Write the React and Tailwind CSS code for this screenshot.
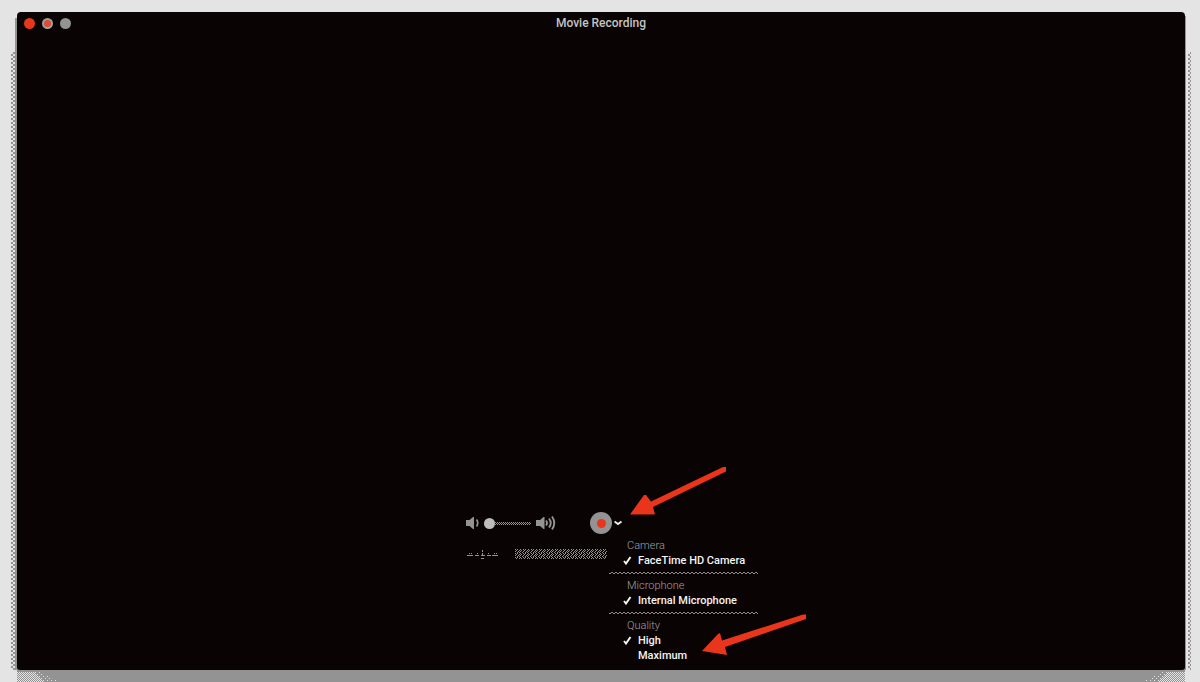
import { useState } from "react";

const dither =
  "bg-[repeating-conic-gradient(#939393_0_25%,#e4e4e4_0_50%)] bg-[length:4px_4px]";
const rule =
  "bg-[repeating-conic-gradient(#8f8f8f_0_25%,#090303_0_50%)] bg-[length:4px_2px]";

function MenuSection({ title, items, value, onSelect }) {
  return (
    <div role="group" aria-label={title}>
      <div className="pl-[18px] text-[11px] leading-[15px] font-light text-[#a0a0a0]">{title}</div>
      {items.map((item) => (
        <button
          key={item}
          type="button"
          role="menuitemradio"
          aria-checked={item === value}
          onClick={() => onSelect(item)}
          className="flex w-full items-center pl-[14px] text-left text-[11px] leading-[15px] font-medium whitespace-nowrap text-[#f4f4f4]"
        >
          <span className="flex w-[15px] shrink-0">
            {item === value && (
              <svg width="9" height="9" viewBox="0 0 9 9" fill="none" stroke="#f4f4f4" strokeWidth="2" aria-hidden="true">
                <path d="M1 5 L3 7.5 L7.5 1" />
              </svg>
            )}
          </span>
          {item}
        </button>
      ))}
    </div>
  );
}

function ShadowCorner({ className }) {
  return (
    <svg className={className} width="50" height="14" viewBox="0 0 50 14" shapeRendering="crispEdges" aria-hidden="true">
      <defs>
        <pattern id="cornerDots" width="4" height="4" patternUnits="userSpaceOnUse">
          <rect width="1" height="1" fill="#e4e4e4" />
          <rect x="2" y="2" width="1" height="1" fill="#e4e4e4" />
        </pattern>
        <pattern id="cornerDense" width="2" height="2" patternUnits="userSpaceOnUse">
          <rect width="1" height="1" fill="#e4e4e4" />
          <rect x="1" y="1" width="1" height="1" fill="#e4e4e4" />
        </pattern>
      </defs>
      <path d="M0 2H16L28 12H0Z" fill="url(#cornerDense)" />
      <path d="M16 2H22L44 12H28Z" fill="url(#cornerDots)" />
    </svg>
  );
}

export default function App() {
  const [volume, setVolume] = useState(0);
  const [quality, setQuality] = useState("High");
  const keep = () => {};

  return (
    <div className="relative flex min-h-screen flex-col overflow-hidden bg-[#e4e4e4] pt-3 pr-[15px] pl-[17px] font-[Roboto,'Liberation_Sans',sans-serif]">
      <div aria-hidden="true" className={`absolute top-[52px] bottom-3 left-[11px] w-1 ${dither}`} />
      <div aria-hidden="true" className="absolute top-[18px] bottom-3 left-[15px] w-1 bg-[#939393]" />
      <div aria-hidden="true" className={`absolute top-[52px] right-[9px] bottom-3 w-[3px] ${dither}`} />
      <div aria-hidden="true" className="absolute top-[16px] right-[14px] bottom-3 w-1 bg-[#939393]" />

      <main className="relative flex flex-1 flex-col rounded-t-[4px] rounded-b-[3px] bg-[#090303] pb-[110px]">
        <header className="grid grid-cols-3 items-center px-[7px] pt-[3px]">
          <div className="flex gap-[7px]">
            <button type="button" aria-label="Close" className="size-[11px] rounded-full bg-[#e8351b]" />
            <button type="button" aria-label="Minimize" className="size-[11px] rounded-full border-2 border-[#a0a0a0] bg-[#e04a35]" />
            <button type="button" aria-label="Zoom" className="size-[11px] rounded-full bg-[#939393]" />
          </div>
          <h1 className="text-center text-[12px] leading-4 font-medium text-[#c4c4c4]">Movie Recording</h1>
        </header>

        <section aria-label="Recording controls" className="mx-auto mt-auto w-[270px]">
          <div className="grid grid-cols-[1fr_22px_1fr] items-center">
            <div className="flex items-center">
              <svg width="14" height="14" viewBox="0 0 14 14" fill="#939393" aria-hidden="true">
                <path d="M0 4H3.5L7 1H8V13H7L3.5 10H0z" />
                <path d="M10.5 3.500q2.500 3.500 0 7" fill="none" stroke="#939393" strokeWidth="1.7" />
              </svg>
              <input
                type="range"
                min="0"
                max="100"
                aria-label="Volume"
                value={volume}
                onChange={(e) => setVolume(Number(e.target.value))}
                className="ml-1 h-[11px] w-[47px] appearance-none bg-transparent [&::-webkit-slider-runnable-track]:h-[3px] [&::-webkit-slider-runnable-track]:bg-[repeating-conic-gradient(#939393_0_25%,#090303_0_50%)] [&::-webkit-slider-runnable-track]:bg-[length:2px_2px] [&::-webkit-slider-thumb]:-mt-[4px] [&::-webkit-slider-thumb]:size-[11px] [&::-webkit-slider-thumb]:appearance-none [&::-webkit-slider-thumb]:rounded-full [&::-webkit-slider-thumb]:bg-[#bdbdbd]"
              />
              <svg className="ml-[5px]" width="20" height="16" viewBox="0 0 20 16" fill="#939393" aria-hidden="true">
                <path d="M0 5H4L7.500 2H8.500V14H7.500L4 11H0z" />
                <path d="M10 5.500q2 2.500 0 5M13 3.500q3.500 4.500 0 9M16 1.500q4.500 6.500 0 13" fill="none" stroke="#939393" strokeWidth="1.900" />
              </svg>
            </div>
            <button type="button" aria-label="Record" className="flex size-[22px] items-center justify-center rounded-full bg-[#939393]">
              <span className="size-[9px] rounded-full bg-[#e8351b]" />
            </button>
            <div className="relative">
              <button type="button" aria-label="Recording options" aria-expanded="true" className="ml-[2px] flex h-4 w-3 items-center">
                <svg width="9" height="6" viewBox="0 0 9 6" fill="none" stroke="#ececec" strokeWidth="2" aria-hidden="true">
                  <path d="M0.500 1.500 L4 4 L7.500 1.500" />
                </svg>
              </button>
              <div role="menu" aria-label="Recording options" className="absolute top-[23px] -left-[3px] w-[149px] bg-[#090303]">
                <MenuSection title="Camera" items={["FaceTime HD Camera"]} value="FaceTime HD Camera" onSelect={keep} />
                <hr className={`my-1 h-[2px] border-0 ${rule}`} />
                <MenuSection title="Microphone" items={["Internal Microphone"]} value="Internal Microphone" onSelect={keep} />
                <hr className={`my-1 h-[2px] border-0 ${rule}`} />
                <MenuSection title="Quality" items={["High", "Maximum"]} value={quality} onSelect={setQuality} />
              </div>
            </div>
          </div>
          <div className="mt-[15px] flex items-center gap-4">
            <svg width="33" height="10" viewBox="0 0 33 10" fill="none" stroke="#939393" shapeRendering="crispEdges" aria-hidden="true">
              <path d="M1 5.500H7M9 5.500H13M15 5.500H19M21 5.500H25M26 5.500H32" />
              <path d="M3.500 3v1M5.500 3v1M11.500 3v1M16.500 0v2M16.500 3v3M15 8.500h3M22.500 3v1M28.500 3v1M30.500 3v1" />
            </svg>
            <svg className="h-[11px] w-[92px]" shapeRendering="crispEdges" aria-hidden="true">
              <defs>
                <pattern id="meter" width="8" height="4" patternUnits="userSpaceOnUse">
                  <path d="M0 0h1v1H0zM2 0h1v1H2zM5 0h1v1H5zM1 1h1v1H1zM4 1h1v1H4zM6 1h1v1H6zM0 2h1v1H0zM3 2h1v1H3zM5 2h1v1H5zM2 3h1v1H2zM4 3h1v1H4zM7 3h1v1H7z" fill="#939393" />
                </pattern>
              </defs>
              <rect width="100%" height="10" fill="url(#meter)" />
            </svg>
          </div>
        </section>
      </main>

      <div aria-hidden="true" className="flex h-3 justify-between bg-[#939393]">
        <ShadowCorner />
        <ShadowCorner className="-scale-x-100" />
      </div>

      <svg className="pointer-events-none absolute top-[465px] left-1/2 ml-[28px]" width="100" height="52" fill="#e8351b" aria-hidden="true">
        <path d="M2 49.500 L16 30 L18 30 L23 36.500 L95 2 L98 2 L98 6.500 L25 42 L27 49.500Z" />
      </svg>
      <svg className="pointer-events-none absolute top-[612px] left-1/2 ml-[102px]" width="106" height="46" fill="#e8351b" aria-hidden="true">
        <path d="M0 39 L16 22 L18 21 L20 28.500 L101 2.500 L104 2.500 L104 7 L23 35 L25 43Z" />
      </svg>
    </div>
  );
}
